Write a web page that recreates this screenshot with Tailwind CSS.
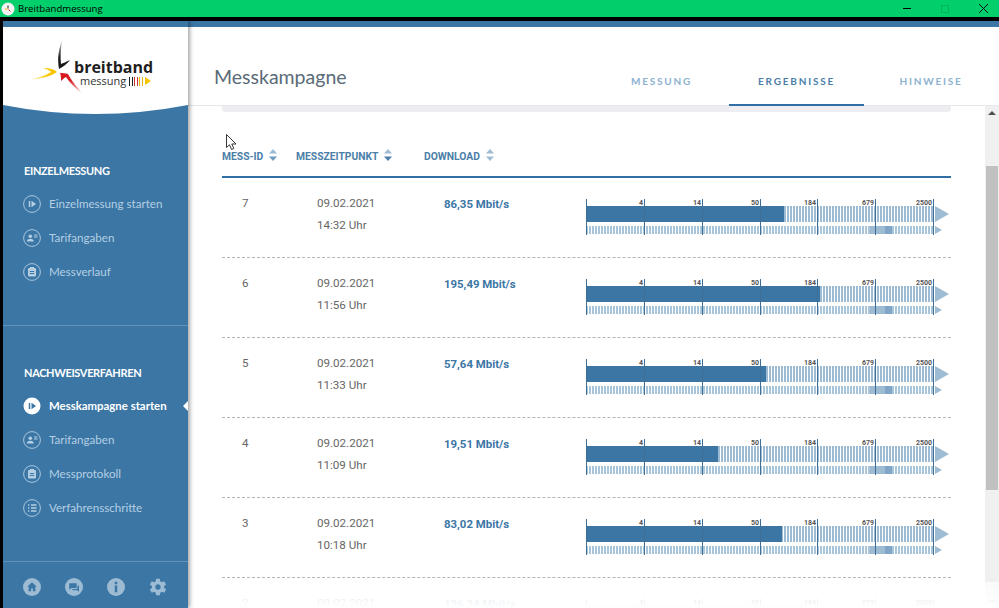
<!DOCTYPE html>
<html lang="de">
<head>
  <meta charset="UTF-8">
  <title>Breitbandmessung</title>
  <script src="https://cdn.jsdelivr.net/npm/@tailwindcss/browser@4"></script>
</head>
<body class="h-[608px] w-[999px] overflow-hidden bg-white font-['Roboto',sans-serif] text-[#666]">

  <!-- Window title bar -->
  <div class="flex h-[17px] items-center bg-[#00cf6c] text-black">
    <svg class="ml-[1px] h-[14px] w-[14px]" viewBox="0 0 14 14">
      <circle cx="7" cy="7" r="6.5" fill="#f3f3f3"/>
      <path d="M7 3.500v3" stroke="#222" stroke-width="1"/>
      <path d="M7.500 7.500l2 2" stroke="#c33" stroke-width="1"/>
      <path d="M4 7h2.500" stroke="#e8b500" stroke-width="1"/>
    </svg>
    <span class="ml-[3px] font-['Open_Sans',sans-serif] text-[9.6px] leading-none">Breitbandmessung</span>
    <div class="ml-auto flex items-center">
      <div class="mr-[30px] h-[1px] w-[8px] bg-black"></div>
      <div class="mr-[30px] h-[8px] w-[8px] border border-[#00b45e]"></div>
      <svg class="mr-[11px] h-[9px] w-[9px]" viewBox="0 0 9 9"><path d="M0 0l9 9M9 0l-9 9" stroke="#111" stroke-width="1"/></svg>
    </div>
  </div>
  <div class="h-[4px] bg-black"></div>

  <div class="flex h-[587px] border-l-[3px] border-black">
    <!-- Sidebar -->
    <aside class="relative z-10 flex w-[185px] shrink-0 flex-col bg-[#3b76a5] shadow-[2px_0_4px_rgba(0,0,0,0.35)] font-['Lato',sans-serif]">
      <div class="h-[6px] bg-[#3b76a5]"></div>
      <!-- Logo -->
      <div class="relative h-[78px] bg-white">
        <svg class="absolute top-[78px] left-0 h-[9px] w-[185px]" viewBox="0 0 185 9" preserveAspectRatio="none">
          <path d="M0 0H185Q92 18 0 0Z" fill="#fff"/>
        </svg>
        <svg class="absolute top-[10px] left-[20px] h-[60px] w-[60px]" viewBox="0 0 60 60">
          <defs>
            <linearGradient id="fadeBlack" x1="0" y1="0" x2="0" y2="1"><stop offset="0" stop-color="#1a1a1a" stop-opacity="0.1"/><stop offset="0.6" stop-color="#1a1a1a"/></linearGradient>
            <linearGradient id="fadeYellow" x1="0" y1="0" x2="1" y2="0"><stop offset="0" stop-color="#f7c600" stop-opacity="0.1"/><stop offset="0.7" stop-color="#f7c600"/></linearGradient>
            <linearGradient id="fadeRed" x1="1" y1="1" x2="0" y2="0"><stop offset="0" stop-color="#d71920" stop-opacity="0.1"/><stop offset="0.6" stop-color="#d71920"/></linearGradient>
          </defs>
          <path d="M39 3C36 12 34 20 36 32C40 30 44 27 47 23C43 25 40 26 38 27C37 20 38 11 39 3Z" fill="url(#fadeBlack)"/>
          <path d="M5 43C16 42 27 40 34 35C31 32 26 31 20 31C24 32 27 34 28 35C22 39 14 41 5 43Z" fill="url(#fadeYellow)"/>
          <path d="M37 36C38 38 38 41 38 44C40 42 41 41 43 40C47 46 53 52 59 56C54 50 48 43 45 37C42 36 40 36 37 36Z" fill="url(#fadeRed)"/>
        </svg>
        <div class="absolute top-[33px] left-[71px] font-['Open_Sans',sans-serif] text-[16px] leading-[14px] font-bold text-[#1f1f1f]">breitband</div>
        <div class="absolute top-[48px] left-[77px] flex items-center font-['Open_Sans',sans-serif] text-[11px] leading-[12px] text-[#333]">messung
          <span class="ml-[3px] flex h-[9px] items-center gap-[1.5px]">
            <i class="h-[9px] w-[1px] bg-[#222]"></i><i class="h-[9px] w-[1px] bg-[#222]"></i><i class="h-[9px] w-[1px] bg-[#c33]"></i><i class="h-[9px] w-[1px] bg-[#c33]"></i><i class="h-[9px] w-[1px] bg-[#eab308]"></i><i class="h-[9px] w-[1px] bg-[#eab308]"></i>
          </span>
          <span class="ml-[2px] h-0 w-0 border-y-[4px] border-l-[6px] border-y-transparent border-l-[#f7c600]"></span>
        </div>
      </div>

      <!-- Einzelmessung -->
      <h2 class="mt-[58px] ml-[21px] text-[11px] leading-[16px] font-bold tracking-[-0.35px] text-white">EINZELMESSUNG</h2>
      <nav id="navTop" class="mt-[12px] flex flex-col gap-[9px]"></nav>

      <div class="mt-[41px] h-[1px] bg-white/20"></div>

      <!-- Nachweisverfahren -->
      <h2 class="mt-[39px] ml-[21px] text-[11px] leading-[16px] font-bold tracking-[-0.35px] text-white">NACHWEISVERFAHREN</h2>
      <nav id="navBottom" class="mt-[12px] flex flex-col gap-[9px]"></nav>

      <!-- Footer icons -->
      <div class="mt-auto border-t border-white/20 pt-[16px] pb-[12px]">
        <div class="flex items-center gap-[24px] pl-[20px] text-[#9dbcd4]">
          <svg class="h-[18px] w-[18px]" viewBox="0 0 17 17"><circle cx="8.500" cy="8.500" r="8.500" fill="currentColor"/><path d="M8.500 4L4 8.200h1.300V12.500h2.400V10h1.600v2.500h2.400V8.200H13Z" fill="#3b76a5"/></svg>
          <svg class="h-[18px] w-[18px]" viewBox="0 0 17 17"><circle cx="8.500" cy="8.500" r="8.500" fill="currentColor"/><path d="M4 5h7v4.500H6L4 11Z" fill="#3b76a5"/><path d="M7 10.500h4l.8-.8V7h1.400v6l-1.700-1.400H7Z" fill="#3b76a5"/></svg>
          <svg class="h-[18px] w-[18px]" viewBox="0 0 17 17"><circle cx="8.500" cy="8.500" r="8.500" fill="currentColor"/><rect x="7.300" y="3.500" width="2.400" height="2.400" fill="#3b76a5"/><rect x="7.300" y="7" width="2.400" height="6.500" fill="#3b76a5"/></svg>
          <svg class="h-[18px] w-[18px]" viewBox="3.500 2.500 19 19"><path fill="currentColor" fill-rule="evenodd" d="M19.400 13a7.500 7.500 0 0 0 0-2l2.100-1.600-2-3.500-2.500 1a7.600 7.600 0 0 0-1.700-1L15 3.200h-4l-.4 2.700a7.600 7.600 0 0 0-1.700 1l-2.500-1-2 3.500L6.600 11a7.500 7.500 0 0 0 0 2l-2.200 1.600 2 3.500 2.500-1a7.600 7.600 0 0 0 1.700 1l.4 2.700h4l.4-2.700a7.600 7.600 0 0 0 1.700-1l2.500 1 2-3.500ZM13 14.800a2.800 2.800 0 1 1 0-5.600 2.800 2.800 0 0 1 0 5.600Z"/></svg>
        </div>
      </div>
    </aside>

    <!-- Main -->
    <main class="flex min-w-0 flex-1 flex-col">
      <div class="h-[6px] bg-[#3b76a5]"></div>
      <!-- Header -->
      <header class="relative flex h-[79px] items-start shadow-[inset_0_-1px_0_#e8e8ec]">
        <h1 class="mt-[36px] ml-[26px] font-['Lato',sans-serif] text-[19.5px] leading-[28px] text-[#5a6b78]">Messkampagne</h1>
        <div class="ml-auto flex h-[79px] font-['Lato',sans-serif] text-[10px] font-bold tracking-[1.8px]">
          <div class="flex w-[135px] items-start justify-center pt-[47px] text-[#8db2cf]">MESSUNG</div>
          <div class="flex h-[79px] w-[135px] items-start justify-center border-b-2 border-[#2f6fa5] pt-[47px] text-[#4a7ea8]">ERGEBNISSE</div>
          <div class="flex w-[135px] items-start justify-center pt-[47px] pr-[1px] text-[#8db2cf]">HINWEISE</div>
        </div>
      </header>

      <div class="relative flex min-h-0 flex-1">
        <!-- Content -->
        <div class="relative w-[797px] overflow-hidden">
          <div class="ml-[34px] h-[6px] w-[729px] rounded-b-[3px] bg-[#eeeef2]"></div>
          <!-- Table head -->
          <div class="mt-[37px] ml-[34px] flex h-[29px] w-[729px] border-b-2 border-[#2f6fa5] text-[10.3px] font-bold text-[#4a7ea8]">
            <div class="flex w-[74px] items-start gap-[6px]"><span class="mt-[1px] leading-[14px]">MESS-ID</span>
              <svg class="h-[12px] w-[8px]" viewBox="0 0 8 12"><path d="M4 0L8 4.500H0Z" fill="#9dbcd4"/><path d="M4 12L8 7.500H0Z" fill="#6f9cc0"/></svg></div>
            <div class="flex w-[128px] items-start gap-[6px]"><span class="mt-[1px] leading-[14px]">MESSZEITPUNKT</span>
              <svg class="h-[12px] w-[8px]" viewBox="0 0 8 12"><path d="M4 0L8 4.500H0Z" fill="#9dbcd4"/><path d="M4 12L8 7.500H0Z" fill="#4a7ea8"/></svg></div>
            <div class="flex items-start gap-[6px]"><span class="mt-[1px] leading-[14px]">DOWNLOAD</span>
              <svg class="h-[12px] w-[8px]" viewBox="0 0 8 12"><path d="M4 0L8 4.500H0Z" fill="#9dbcd4"/><path d="M4 12L8 7.500H0Z" fill="#9dbcd4"/></svg></div>
          </div>
          <div id="rows" class="ml-[34px] w-[729px]"></div>
          <!-- Mouse pointer -->
          <svg class="absolute top-[28px] left-[38px] h-[17px] w-[12px]" viewBox="0 0 12 17"><path d="M.5.5V13.500L3.500 10.800 5.600 15.500 7.800 14.500 5.800 10H10Z" fill="#fff" stroke="#222" stroke-width="0.9"/></svg>
        </div>

        <!-- Scrollbar -->
        <div class="flex w-[14px] flex-col items-center bg-[#f0f0f0]">
          <div class="mt-[5px] h-0 w-0 border-x-[4px] border-b-[4px] border-x-transparent border-b-[#505050]"></div>
          <div class="mt-[51px] h-[324px] w-[12px] bg-[#c1c1c1]"></div>
          <div class="mt-auto mb-[4px] h-0 w-0 border-x-[4px] border-t-[4px] border-x-transparent border-t-[#a3a3a3]"></div>
        </div>

        <!-- Fade at the bottom of the scroll area -->
        <div class="pointer-events-none absolute right-0 bottom-0 left-0 h-[26px] bg-gradient-to-b from-white/70 to-white"></div>
      </div>
    </main>
  </div>

  <script>
    // Sidebar icons
    const icons = {
      play: '<path d="M6.500 6v6" stroke="currentColor" stroke-width="1.500"/><path d="M8.500 5.800L13 9l-4.500 3.200Z" fill="currentColor"/>',
      user: '<circle cx="7.300" cy="7.300" r="1.800" fill="currentColor"/><path d="M3.800 12.500c0-2 1.500-2.800 3.500-2.800s3.500.8 3.500 2.800Z" fill="currentColor"/><path d="M11 6h3.500M11 8h3.500" stroke="currentColor"/>',
      clip: '<rect x="5" y="5" width="8" height="8.500" rx="1" fill="currentColor"/><rect x="7" y="4" width="4" height="2" fill="currentColor"/><path d="M6.800 8.500h4.400M6.800 10.500h4.400" stroke="#3b76a5"/>',
      list: '<path d="M8 6h5.500M8 9h5.500M8 12h5.500" stroke="currentColor" stroke-width="1.300"/><path d="M5 6h1.300M5 9h1.300M5 12h1.300" stroke="currentColor" stroke-width="1.300"/>'
    };

    function navItem(label, icon, active) {
      if (active) {
        return `<a class="relative flex h-[25px] items-center gap-[8px] pl-[20px] text-[11.4px] font-bold text-white">
          <svg class="h-[18px] w-[18px] text-[#3b76a5]" viewBox="0 0 18 18"><circle cx="9" cy="9" r="8.500" fill="#fff"/>${icons[icon]}</svg>
          ${label}
          <span class="absolute right-0 h-0 w-0 border-y-[5px] border-r-[5px] border-y-transparent border-r-white"></span>
        </a>`;
      }
      return `<a class="flex h-[25px] items-center gap-[8px] pl-[20px] text-[11.6px] text-[#b5cfe3]">
        <svg class="h-[18px] w-[18px] text-[#b5cfe3]" viewBox="0 0 18 18"><circle cx="9" cy="9" r="8.400" fill="none" stroke="currentColor" stroke-width="0.9"/>${icons[icon]}</svg>
        ${label}
      </a>`;
    }

    document.getElementById("navTop").innerHTML = [
      navItem("Einzelmessung starten", "play"),
      navItem("Tarifangaben", "user"),
      navItem("Messverlauf", "clip")
    ].join("");

    document.getElementById("navBottom").innerHTML = [
      navItem("Messkampagne starten", "play", true),
      navItem("Tarifangaben", "user"),
      navItem("Messprotokoll", "clip"),
      navItem("Verfahrensschritte", "list")
    ].join("");

    // Results table
    const results = [
      { id: 7, date: "09.02.2021", time: "14:32 Uhr", speed: "86,35 Mbit/s", bar: 198 },
      { id: 6, date: "09.02.2021", time: "11:56 Uhr", speed: "195,49 Mbit/s", bar: 234 },
      { id: 5, date: "09.02.2021", time: "11:33 Uhr", speed: "57,64 Mbit/s", bar: 180 },
      { id: 4, date: "09.02.2021", time: "11:09 Uhr", speed: "19,51 Mbit/s", bar: 132 },
      { id: 3, date: "09.02.2021", time: "10:18 Uhr", speed: "83,02 Mbit/s", bar: 196 },
      { id: 2, date: "09.02.2021", time: "09:41 Uhr", speed: "136,34 Mbit/s", bar: 220 }
    ];

    const ticks = [
      { x: 58, label: "4" },
      { x: 116, label: "14" },
      { x: 174, label: "50" },
      { x: 231, label: "184" },
      { x: 289, label: "679" },
      { x: 347, label: "2500" }
    ];

    function meter(bar) {
      const marks = ticks.map(t => `
        <div class="absolute top-0 h-[36px] w-[1px] bg-[#3f6f96]" style="left:${t.x}px"></div>
        <span class="absolute top-0 text-right text-[7px] leading-[8px] font-bold text-[#555]" style="left:${t.x - 31}px;width:30px">${t.label}</span>`).join("");
      return `<div class="relative h-[36px] w-[363px]">
        <div class="absolute top-[7px] left-0 h-[16px] w-[348px] bg-[repeating-linear-gradient(90deg,#9dbcd4_0,#9dbcd4_2px,#fff_2px,#fff_3px)]"></div>
        <div class="absolute top-[7px] left-0 h-[16px] bg-[#3b76a5]" style="width:${bar}px"></div>
        <div class="absolute top-[27px] left-0 h-[8px] w-[348px] bg-[repeating-linear-gradient(90deg,#a9c5da_0,#a9c5da_2px,#fff_2px,#fff_3px)]"></div>
        <div class="absolute top-[27px] left-[284px] h-[8px] w-[15px] bg-[#9dbcd4]"></div>
        <div class="absolute top-[27px] left-[299px] h-[8px] w-[7px] bg-[#7fa6c6]"></div>
        <div class="absolute top-[7px] left-[349px] h-0 w-0 border-y-[8px] border-l-[14px] border-y-transparent border-l-[#9dbcd4]"></div>
        <div class="absolute top-[27px] left-[349px] h-0 w-0 border-y-[4px] border-l-[7px] border-y-transparent border-l-[#9dbcd4]"></div>
        <div class="absolute top-0 left-0 h-[36px] w-[1px] bg-[#3f6f96]"></div>
        ${marks}
      </div>`;
    }

    document.getElementById("rows").innerHTML = results.map(r => `
      <div class="flex h-[80px] border-b border-dashed border-[#b5b5b5] text-[11.6px]">
        <div class="w-[74px] pt-[16px] pl-[20px] leading-[18px]">${r.id}</div>
        <div class="w-[128px] pt-[14px] pl-[21px] leading-[22px]">${r.date}<br>${r.time}</div>
        <div class="w-[162px] pt-[18px] pl-[20px] text-[11.4px] leading-[16px] font-bold text-[#3b76a5]">${r.speed}</div>
        <div class="pt-[21px]">${meter(r.bar)}</div>
      </div>`).join("");
  </script>
</body>
</html>
